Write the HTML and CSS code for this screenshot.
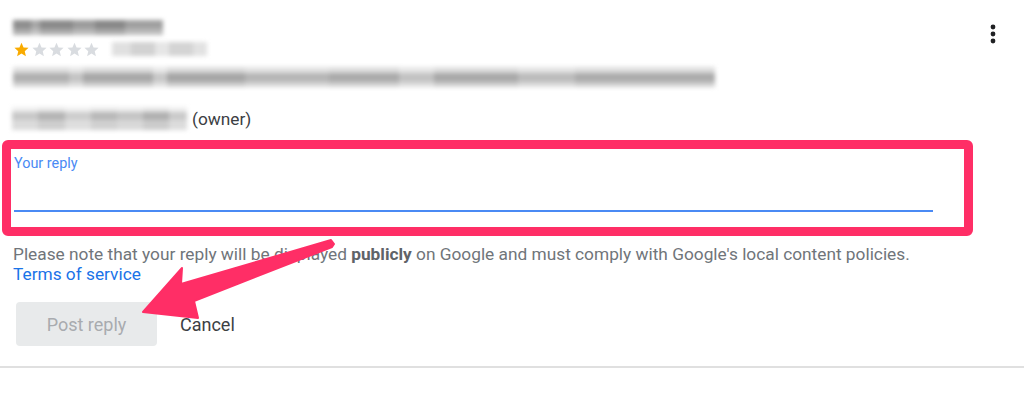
FILE: index.html
```html
<!DOCTYPE html>
<html lang="en">
<head>
<meta charset="utf-8">
<title>Reply to review</title>
<link rel="stylesheet" href="styles.css">
</head>
<body>
<div class="page">
  <div class="review">
    <div class="head">
      <div class="meta">
        <div class="mosaic name"></div>
        <div class="rating-row">
          <div class="stars">
            <svg width="17" height="17" viewBox="0 0 24 24"><path class="on" d="M12 2.5l2.9 6.6 7.1.6-5.4 4.7 1.6 7-6.2-3.7-6.2 3.7 1.6-7L2 9.7l7.1-.6z"/></svg>
            <svg width="17" height="17" viewBox="0 0 24 24"><path d="M12 2.5l2.9 6.6 7.1.6-5.4 4.7 1.6 7-6.2-3.7-6.2 3.7 1.6-7L2 9.7l7.1-.6z"/></svg>
            <svg width="17" height="17" viewBox="0 0 24 24"><path d="M12 2.5l2.9 6.6 7.1.6-5.4 4.7 1.6 7-6.2-3.7-6.2 3.7 1.6-7L2 9.7l7.1-.6z"/></svg>
            <svg width="17" height="17" viewBox="0 0 24 24"><path d="M12 2.5l2.9 6.6 7.1.6-5.4 4.7 1.6 7-6.2-3.7-6.2 3.7 1.6-7L2 9.7l7.1-.6z"/></svg>
            <svg width="17" height="17" viewBox="0 0 24 24"><path d="M12 2.5l2.9 6.6 7.1.6-5.4 4.7 1.6 7-6.2-3.7-6.2 3.7 1.6-7L2 9.7l7.1-.6z"/></svg>
          </div>
          <div class="mosaic date"></div>
        </div>
      </div>
      <button class="kebab" aria-label="More options">
        <svg width="6" height="20" viewBox="0 0 6 20"><circle cx="3" cy="3" r="2.4"/><circle cx="3" cy="10" r="2.4"/><circle cx="3" cy="17" r="2.4"/></svg>
      </button>
    </div>
    <div class="mosaic review-text"></div>
    <div class="owner"><span class="mosaic owner-name"></span><span class="owner-tag">(owner)</span></div>
  </div>

  <div class="reply-frame">
    <div class="reply-field">
      <label class="reply-label">Your reply</label>
      <div class="reply-line"></div>
    </div>
  </div>

  <p class="notice">Please note that your reply will be displayed <b>publicly</b> on Google and must comply with Google's local content policies.<br><a href="#">Terms of service</a></p>

  <div class="actions">
    <button class="btn-post" disabled>Post reply</button>
    <button class="btn-cancel">Cancel</button>
  </div>

  <div class="divider"></div>

  <svg class="arrow" width="1024" height="398" viewBox="0 0 1024 398">
    <polygon points="143,312 182,268 181,284 331,240 334,244 332,247 194,301 198,318" />
  </svg>
</div>
</body>
</html>
```

FILE: styles.css
```css
* { box-sizing: border-box; }
html, body { margin: 0; padding: 0; background: #fff; }
body {
  font-family: Roboto, "Liberation Sans", Arial, sans-serif;
  color: #3c4043;
  width: 1024px;
  height: 398px;
  overflow: hidden;
}
.page { position: relative; width: 1024px; height: 398px; }

.review { padding: 20px 0 0 13px; }
.head { display: flex; justify-content: space-between; align-items: flex-start; }
.meta { display: flex; flex-direction: column; }

.mosaic {
  display: block;
  filter: blur(2px);
}
.name {
  width: 150px; height: 15px;
  background:
    linear-gradient(#0000 0 9px, rgba(255,255,255,0.3) 9px),
    linear-gradient(90deg, #8e8e8e 0 12%, #a8a8a8 12% 18%, #8a8a8a 18% 40%, #9c9c9c 40% 55%, #888 55% 75%, #a0a0a0 75% 100%);
}
.rating-row { display: flex; align-items: center; margin-top: 6px; height: 16px; }
.stars { display: flex; gap: 0.5px; margin-left: 0; }
.stars svg { display: block; }
.stars path { fill: #d9dce0; }
.stars path.on { fill: #f9ab00; }
.date {
  width: 95px; height: 14px; margin-left: 12px;
  background: linear-gradient(90deg, #e0e0e0 0 20%, #d2d2d2 20% 45%, #e6e6e6 45% 60%, #d4d4d4 60% 85%, #e2e2e2 85%);
}
.kebab {
  border: 0; background: none; padding: 0; margin: 4px 28px 0 0;
  width: 6px; height: 20px; cursor: pointer;
}
.kebab svg { display: block; fill: #202124; }

.review-text {
  width: 702px; height: 20px; margin-top: 10px;
  background:
    linear-gradient(rgba(255,255,255,0.6) 0 6px, #0000 6px 15px, rgba(255,255,255,0.45) 15px),
    linear-gradient(90deg, #b0b0b0 0 8%, #c4c4c4 8% 10%, #a8a8a8 10% 20%, #c8c8c8 20% 22%, #a6a6a6 22% 33%, #b6b6b6 33% 45%, #ababab 45% 55%, #c2c2c2 55% 60%, #a9a9a9 60% 72%, #bcbcbc 72% 80%, #acacac 80% 100%);
}
.owner { display: flex; align-items: center; margin-top: 20px; height: 23px; margin-left: -1px; }
.owner-name {
  width: 175px; height: 23px;
  background:
    linear-gradient(rgba(255,255,255,0.7) 0 5px, #0000 5px 13px, rgba(255,255,255,0.35) 13px),
    linear-gradient(90deg, #c8c8c8 0 15%, #b4b4b4 15% 30%, #cdcdcd 30% 45%, #b8b8b8 45% 60%, #c4c4c4 60% 75%, #b0b0b0 75% 90%, #cacaca 90%);
}
.owner-tag { margin-left: 5px; font-size: 17.3px; color: #3c4043; }

.reply-frame {
  margin: 10px 0 0 2px;
  width: 971px; height: 96px;
  border: 9px solid #ff2e66;
  border-radius: 6px;
}
.reply-field { padding: 6px 0 0 3px; }
.reply-label { display: block; font-size: 14.4px; line-height: 17px; color: #4a8af4; }
.reply-line { margin-top: 38px; width: 919px; height: 2px; background: #4a8af4; }

.notice {
  margin: 8px 0 0 13px;
  font-size: 17.3px; line-height: 20px; color: #70757a;
}
.notice b { color: #5f6368; font-weight: 700; }
.notice a { color: #1a73e8; text-decoration: none; }

.actions { display: flex; align-items: center; margin: 18px 0 0 16px; }
.btn-post {
  width: 141px; height: 44px;
  border: 0; border-radius: 4px;
  background: #e8eaeb;
  color: #a8abaf;
  font: 400 18px Roboto, "Liberation Sans", sans-serif;
}
.btn-cancel {
  margin-left: 10px; height: 44px; padding: 0 13px;
  border: 0; background: none;
  color: #3c4043;
  font: 400 18px Roboto, "Liberation Sans", sans-serif;
}

.divider { margin-top: 20px; height: 2px; background: #e0e0e0; }

.arrow { position: absolute; left: 0; top: 0; pointer-events: none; }
.arrow polygon { fill: #ff2e66; stroke: #ff2e66; stroke-width: 2; stroke-linejoin: round; }
```
